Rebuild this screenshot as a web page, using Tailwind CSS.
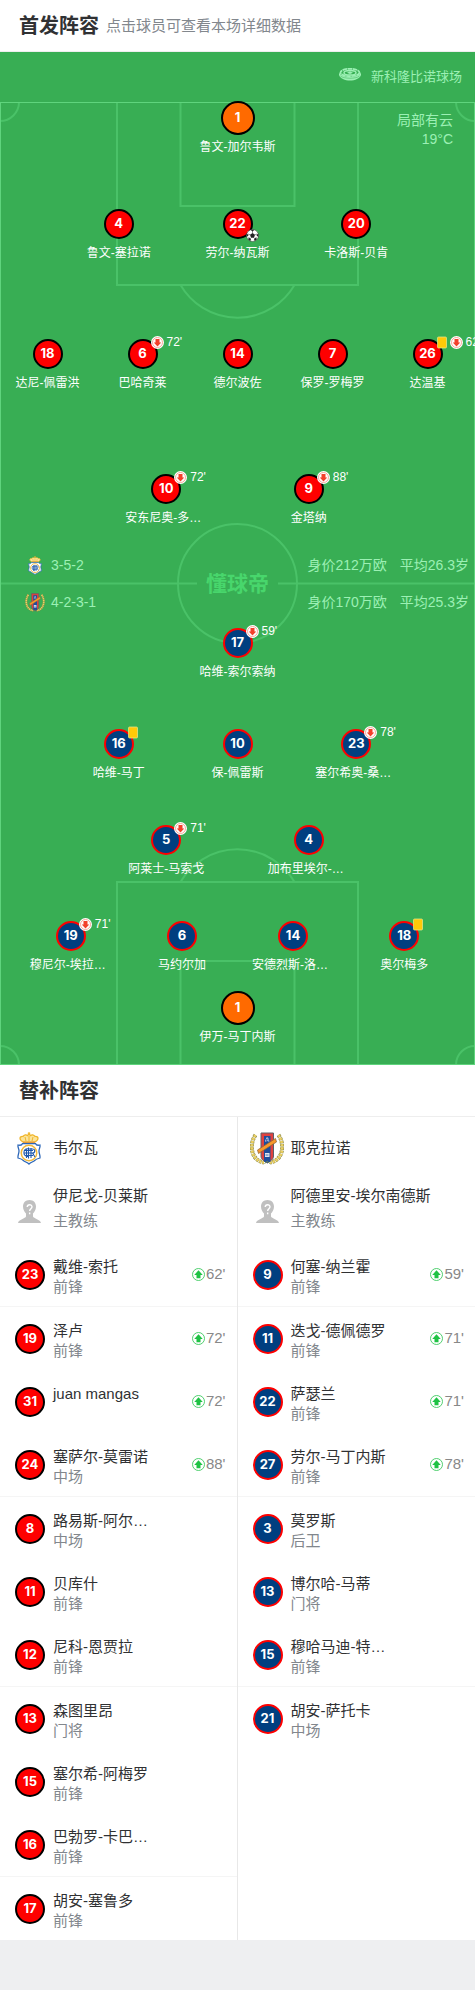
<!DOCTYPE html>
<html lang="zh-CN">
    <head>
        <title>首发阵容</title>
        <meta charset="utf-8">
        <meta name="viewport" content="width=device-width, initial-scale=1">
        <script src="https://cdn.jsdelivr.net/npm/@tailwindcss/browser@4"></script>
    </head>
    <body class="bg-[#eeeff1] text-[#303133] font-['Liberation_Sans','Noto_Sans_CJK_SC',sans-serif]">
        <svg class="hidden">
            <symbol id="icon-down" viewBox="0 0 26 26">
                <circle cx="13" cy="13" r="13" fill="#fff"/>
                <circle cx="13" cy="13" r="10" fill="none" stroke="#f58a7a" stroke-width="1.5"/>
                <path d="M9 6h8v7h3.500L13 21l-7.500-8H9z" fill="#f2402a"/>
            </symbol>
            <symbol id="icon-up" viewBox="0 0 26 26">
                <circle cx="13" cy="13" r="12" fill="#fff" stroke="#3cc95f" stroke-width="1.800"/>
                <path d="M9 20.500h8V14h4.500L13 4.500 4.500 14H9z" fill="#1fc244"/>
            </symbol>
            <symbol id="icon-card" viewBox="0 0 20 24">
                <rect x="1" y="1" width="18" height="22" rx="2" fill="#ffca08" stroke="#e6e58a" stroke-width="1.500"/>
            </symbol>
            <symbol id="icon-ball" viewBox="0 0 26 26">
                <circle cx="13" cy="13" r="12" fill="#fff" stroke="#333" stroke-width="1"/>
                <path d="M13 8l5 3.600-2 6h-6l-2-6zM9 1.600h8L13 5zM24.500 9l.3 7-4-3.500zM1.500 9l-.3 7 4-3.500zM4.500 21l1-5 4.500 5-1.500 3zM21.500 21l-1-5-4.500 5 1.500 3z" fill="#222"/>
                <path d="M13 8V4M18 11.600l4-1.500M16 17.600l2.500 3.400M10 17.600L7.500 21M8 11.600L4 10" stroke="#222" stroke-width="1"/>
            </symbol>
            <symbol id="icon-stadium" viewBox="0 0 44 26">
                <path d="M0 9v5c2 7 12 11 22 11s20-4 22-11V9c-3 6-12 9-22 9S3 15 0 9z" fill="#9cf0b4"/>
                <path d="M3 16c6 6 32 6 38 0" fill="none" stroke="#38ae54" stroke-width="1"/>
                <ellipse cx="22" cy="9" rx="19" ry="7.500" fill="none" stroke="#9cf0b4" stroke-width="3.500" stroke-dasharray="9 1"/>
                <ellipse cx="22" cy="9.500" rx="12" ry="4.500" fill="none" stroke="#9cf0b4" stroke-width="3"/>
                <path d="M16 9.500l6-3 6 3-6 2.500z" fill="#9cf0b4"/>
            </symbol>
            <symbol id="icon-coach" viewBox="0 0 46 46">
                <path d="M23 0c8 0 13 5.500 13 13 0 6-3 11-6 14v6c1 4 15 6 16 13H0c1-7 15-9 16-13v-6c-3-3-6-8-6-14C10 5.500 15 0 23 0z" fill="#c0c0c0"/>
                <path d="M18.500 14c0-6 9.500-6 9.500-.5 0 4-4.700 4-4.700 8.500M23.300 25v3.500" fill="none" stroke="#fff" stroke-width="2.800"/>
            </symbol>
            <symbol id="crest-home" viewBox="0 0 48 66">
                <path d="M12 20c-8-4-8-12 0-11 2-4 7-4 9-2l3-3 3 3c2-2 7-2 9 2 8-1 8 7 0 11z" fill="#fbe49a" stroke="#f0b62c" stroke-width="2.500"/>
                <path d="M24 0v5M21.500 2.500h5M16 10l2 8M24 8v10M32 10l-2 8" stroke="#f0b62c" stroke-width="2" fill="none"/>
                <path d="M12 20.500h24" stroke="#e08a2c" stroke-width="2"/>
                <path d="M11 23h26c1 3 5 4 9 3 1 5-2 7-2 12 0 6 3 8 2 14-5 1-9 3-12 6-3 2-7 3-10 6-3-3-7-4-10-6-3-3-7-5-12-6-1-6 2-8 2-14 0-5-3-7-2-12 4 1 8 0 9-3z" fill="#fff" stroke="#2b66b8" stroke-width="2.500"/>
                <circle cx="24" cy="42" r="15.500" fill="#fff" stroke="#f2b93a" stroke-width="3"/>
                <path d="M23 34c-11-4-13 16-1 15M19 33v19M28 32v20M14 42h20M24 34h7c6 0 6 8 0 8l5 8M23 31v22M15 37h17M16 47h16" fill="none" stroke="#1c57ad" stroke-width="2.200"/>
            </symbol>
            <symbol id="crest-away" viewBox="0 0 68 66">
                <path d="M11 6C1 20 1 42 12 53c5 5 10 7 16 8M57 6c10 14 10 36-1 47-5 5-10 7-16 8" fill="none" stroke="#8c8a45" stroke-width="8" stroke-dasharray="5 1.500"/>
                <path d="M11 6C1 20 1 42 12 53c5 5 10 7 16 8M57 6c10 14 10 36-1 47-5 5-10 7-16 8" fill="none" stroke="#ecd062" stroke-width="5.500" stroke-dasharray="4.500 2"/>
                <path d="M22 2h25v46c0 7-6 10-12.500 14C28 58 22 55 22 48z" fill="#e0413f" stroke="#5c6068" stroke-width="2"/>
                <path d="M28 8h13v51l-6.500 3-6.500-3z" fill="#1f4d9c"/>
                <path d="M30 19l3-8h3l3 8zM30 42h9v8h-9z" fill="#dfe5f2"/>
                <path d="M33 14h3v5h-3zM31 46h6" stroke="#1f4d9c" stroke-width="1.500" fill="none"/>
                <path d="M15 36l36-23 2 7-36 23z" fill="#f9982c" stroke="#8d6535" stroke-width="1.500"/>
                <path d="M29 63l5.500-4 5.500 4" fill="none" stroke="#7d8a45" stroke-width="2"/>
            </symbol>
        </svg>

        <header class="flex items-center gap-[7px] h-[52px] px-[19px] bg-white border-b border-[#eee]">
            <h1 class="text-[20px] leading-[30px] font-bold">首发阵容</h1>
            <p class="text-[15px] leading-[22px] text-[#82878d]">点击球员可查看本场详细数据</p>
        </header>

        <main>
            <section class="relative overflow-hidden bg-[#38ae54] pb-[19px] text-[#9cf0b4]">
                <!-- pitch markings -->
                <div class="absolute inset-x-0 top-[50px] bottom-0">
                    <svg class="w-full h-full" viewBox="0 0 475 963" preserveAspectRatio="none" fill="none" stroke="#4ac268" stroke-width="2">
                        <path d="M117 0v183h241V0M180.500 0v104h114V0M180.500 183a66 66 0 0 0 114 0"/>
                        <path d="M117 963V780h241V963M180.500 963V859h114V963M180.500 780a66 66 0 0 1 114 0"/>
                        <path d="M19 0a19 19 0 0 1-19 19M456 0a19 19 0 0 0 19 19M0 944a19 19 0 0 1 19 19M475 944a19 19 0 0 0-19 19"/>
                        <circle cx="237.500" cy="481.500" r="59.500"/>
                        <path d="M0 481.500h197M278 481.500h197"/>
                        <rect x=".5" y=".5" width="474" height="962" stroke="#5fd47d" stroke-width="1"/>
                    </svg>
                </div>
                <div class="relative">
                    <div class="flex justify-end items-center gap-[10px] h-[49px] pr-[13px]">
                        <svg class="w-[22px] h-[13px] mb-1"><use href="#icon-stadium"/></svg>
                        <span class="text-[13px] leading-[18px]">新科隆比诺球场</span>
                    </div>
                    <div class="absolute right-[22px] top-[59px] text-right text-[14px] leading-[19px]">
                        <p>局部有云</p>
                        <p>19°C</p>
                    </div>
                    <div id="home-lineup"></div>
                    <div class="relative mt-5 mb-[5px] pl-[25px] pr-[6px] text-[14px]">
                        <div class="flex items-center h-[37px]">
                            <svg class="w-5 h-[19px]"><use href="#crest-home"/></svg>
                            <span class="ml-[6px]">3-5-2</span>
                            <span class="ml-auto">身价212万欧</span>
                            <span class="ml-[13px]">平均26.3岁</span>
                        </div>
                        <div class="flex items-center h-[37px]">
                            <svg class="w-5 h-[19px]"><use href="#crest-away"/></svg>
                            <span class="ml-[6px]">4-2-3-1</span>
                            <span class="ml-auto">身价170万欧</span>
                            <span class="ml-[13px]">平均25.3岁</span>
                        </div>
                        <strong class="absolute inset-0 flex items-center justify-center text-[21px] leading-5 font-bold text-[#48d66c] pointer-events-none">懂球帝</strong>
                    </div>
                    <div id="away-lineup"></div>
                </div>
            </section>

            <section class="bg-white">
                <h2 class="flex items-center h-[52px] px-[19px] border-b border-[#eee] text-[20px] font-bold">替补阵容</h2>
                <div class="grid grid-cols-2">
                    <div class="border-r border-[#e8e8e8]">
                        <div class="flex items-center h-[63px] pl-3">
                            <svg class="w-[34px] h-[33px]"><use href="#crest-home"/></svg>
                            <span class="ml-[7px] text-[15px]">韦尔瓦</span>
                        </div>
                        <div class="flex items-center h-[63px] pl-[18px]">
                            <svg class="w-[23px] h-[23px]"><use href="#icon-coach"/></svg>
                            <div class="ml-3 pb-2 text-[15px] leading-[25px]">
                                <p>伊尼戈-贝莱斯</p>
                                <p class="text-[#82878d]">主教练</p>
                            </div>
                        </div>
                        <ul id="home-bench"></ul>
                    </div>
                    <div>
                        <div class="flex items-center h-[63px] pl-3">
                            <svg class="w-[34px] h-[33px]"><use href="#crest-away"/></svg>
                            <span class="ml-[7px] text-[15px]">耶克拉诺</span>
                        </div>
                        <div class="flex items-center h-[63px] pl-[18px]">
                            <svg class="w-[23px] h-[23px]"><use href="#icon-coach"/></svg>
                            <div class="ml-3 pb-2 text-[15px] leading-[25px]">
                                <p>阿德里安-埃尔南德斯</p>
                                <p class="text-[#82878d]">主教练</p>
                            </div>
                        </div>
                        <ul id="away-bench"></ul>
                    </div>
                </div>
            </section>
        </main>
    </body>
    <script>
        var shirt = {
            home: "bg-[#fe0000] border-black",
            away: "bg-[#003f80] border-[#fe0000]",
            keeper: "bg-[#ff6a00] border-black"
        };
        // column width by number of players in the line
        var column = { 1: "w-1/5", 2: "w-[30%]", 3: "w-1/4", 4: "w-[23.4%]", 5: "w-1/5" };

        // player: [number, name, minute off, yellow card, goal]
        var homeLines = [
            ["", [[1, "鲁文-加尔韦斯"]]],
            ["mt-[51px]", [[4, "鲁文-塞拉诺"], [22, "劳尔-纳瓦斯", "", false, true], [20, "卡洛斯-贝肯"]]],
            ["mt-[75px]", [[18, "达尼-佩雷洪"], [6, "巴哈奇莱", "72'"], [14, "德尔波佐"], [7, "保罗-罗梅罗"], [26, "达温基", "62'", true]]],
            ["mt-[80px]", [[10, "安东尼奥-多…", "72'"], [9, "金塔纳", "88'"]]]
        ];
        var awayLines = [
            ["", [[17, "哈维-索尔索纳", "59'"]]],
            ["mt-[46px]", [[16, "哈维-马丁", "", true], [10, "保-佩雷斯"], [23, "塞尔希奥-桑…", "78'"]]],
            ["mt-[41px]", [[5, "阿莱士-马索戈", "71'"], [4, "加布里埃尔-…"]]],
            ["mt-[41px]", [[19, "穆尼尔-埃拉…", "71'"], [6, "马约尔加"], [14, "安德烈斯-洛…"], [18, "奥尔梅多", "", true]]],
            ["mt-[17px]", [[1, "伊万-马丁内斯"]]]
        ];
        // substitute: [number, name, position, minute on]
        var homeBench = [
            [23, "戴维-索托", "前锋", "62'"], [19, "泽卢", "前锋", "72'"], [31, "juan mangas", "", "72'"],
            [24, "塞萨尔-莫雷诺", "中场", "88'"], [8, "路易斯-阿尔…", "中场"], [11, "贝库什", "前锋"],
            [12, "尼科-恩贾拉", "前锋"], [13, "森图里昂", "门将"], [15, "塞尔希-阿梅罗", "前锋"],
            [16, "巴勃罗-卡巴…", "前锋"], [17, "胡安-塞鲁多", "前锋"]
        ];
        var awayBench = [
            [9, "何塞-纳兰霍", "前锋", "59'"], [11, "迭戈-德佩德罗", "前锋", "71'"], [22, "萨瑟兰", "前锋", "71'"],
            [27, "劳尔-马丁内斯", "前锋", "78'"], [3, "莫罗斯", "后卫"], [13, "博尔哈-马蒂", "门将"],
            [15, "穆哈马迪-特…", "前锋"], [21, "胡安-萨托卡", "中场"]
        ];

        function playerHTML(p, team, count) {
            var keeper = p[0] == 1;
            // shortened names keep the left edge of the 82px name box
            var name = p[1].endsWith("…") ? "w-[82px]" : "";
            return `<a href="#" class="${column[count]} flex flex-col items-center text-white">
                <span class="flex items-center h-[34px]">
                    <span class="relative flex items-center justify-center rounded-full border-2 ${keeper ? "size-[34px]" : "size-[30px]"} ${keeper ? shirt.keeper : shirt[team]}">
                        <b class="font-['Inter',sans-serif] text-[13px] font-bold">${p[0]}</b>
                        <span class="absolute left-[21px] -top-[5px] flex items-center gap-[2px]">
                            ${p[3] ? `<svg class="w-[10px] h-[13px] mx-px"><use href="#icon-card"/></svg>` : ""}
                            ${p[2] ? `<svg class="size-[13px]"><use href="#icon-down"/></svg><span class="ml-px text-[12px] leading-[13px]">${p[2]}</span>` : ""}
                        </span>
                        ${p[4] ? `<svg class="absolute left-[21px] -bottom-[5px] size-[13px]"><use href="#icon-ball"/></svg>` : ""}
                    </span>
                </span>
                <span class="mt-[3px] text-[12px] leading-[18px] whitespace-nowrap ${name}">${p[1]}</span>
            </a>`;
        }

        function renderLines(id, lines, team) {
            document.getElementById(id).innerHTML = lines.map(function (line) {
                return `<div class="flex justify-center ${line[0]}">${line[1].map(p => playerHTML(p, team, line[1].length)).join("")}</div>`;
            }).join("");
        }

        function renderBench(id, bench, team) {
            document.getElementById(id).innerHTML = bench.map(function (p, i) {
                // a divider after every third row, counted from the first
                var line = i % 3 == 0 ? "h-16 border-b border-[#f5f5f5]" : "h-[63px]";
                return `<li class="${line}"><a href="#" class="flex items-center h-[63px] pl-[15px] pr-[11px] text-[15px]">
                    <b class="flex items-center justify-center size-[30px] rounded-full border-2 text-white font-['Inter',sans-serif] text-[13px] font-bold ${shirt[team]}">${p[0]}</b>
                    <span class="self-start mt-[14px] ml-2 leading-5">${p[1]}<span class="block text-[#82878d]">${p[2]}</span></span>
                    ${p[3] ? `<svg class="ml-auto size-[13px]"><use href="#icon-up"/></svg><span class="ml-px text-[#888]">${p[3]}</span>` : ""}
                </a></li>`;
            }).join("");
        }

        renderLines("home-lineup", homeLines, "home");
        renderLines("away-lineup", awayLines, "away");
        renderBench("home-bench", homeBench, "home");
        renderBench("away-bench", awayBench, "away");
    </script>
</html>
